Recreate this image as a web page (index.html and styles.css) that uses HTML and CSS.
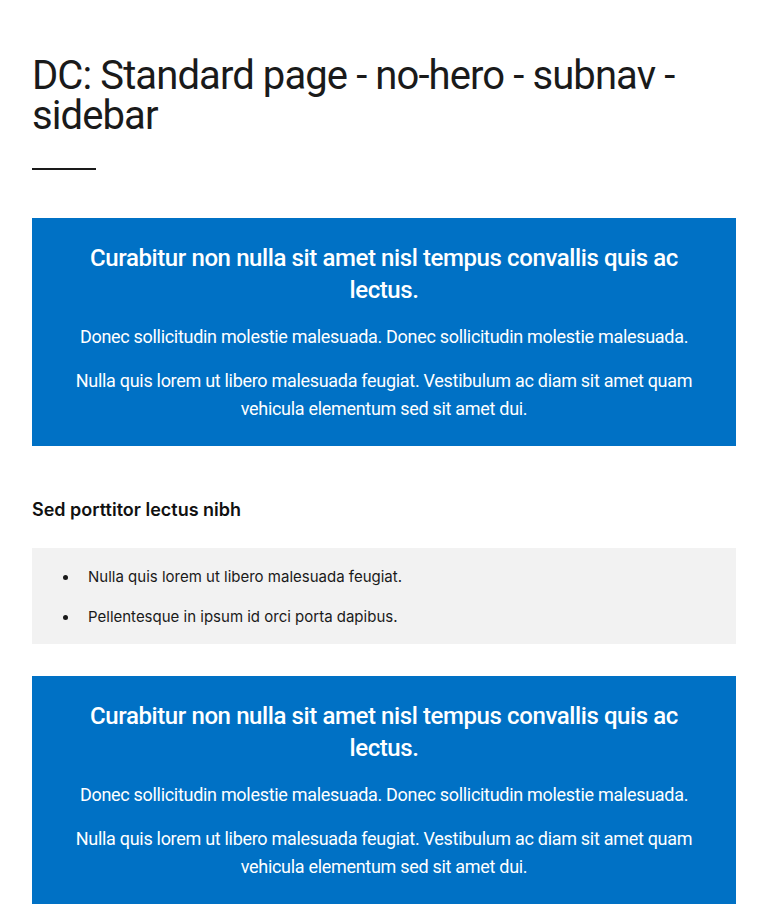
FILE: index.html
```html
<!DOCTYPE html>
<html lang="en">
<head>
<meta charset="utf-8">
<title>DC: Standard page - no-hero - subnav - sidebar</title>
<link rel="stylesheet" href="styles.css">
</head>
<body>
<main class="page">
  <header class="page-header">
    <h1 class="page-title">DC: Standard page - no-hero - subnav - sidebar</h1>
    <hr class="title-rule">
  </header>

  <section class="callout">
    <h2 class="callout-title">Curabitur non nulla sit amet nisl tempus convallis quis ac lectus.</h2>
    <p class="callout-text">Donec sollicitudin molestie malesuada. Donec sollicitudin molestie malesuada.</p>
    <p class="callout-text">Nulla quis lorem ut libero malesuada feugiat. Vestibulum ac diam sit amet quam vehicula elementum sed sit amet dui.</p>
  </section>

  <h3 class="section-title">Sed porttitor lectus nibh</h3>

  <div class="list-box">
    <ul class="bullets">
      <li>Nulla quis lorem ut libero malesuada feugiat.</li>
      <li>Pellentesque in ipsum id orci porta dapibus.</li>
    </ul>
  </div>

  <section class="callout">
    <h2 class="callout-title">Curabitur non nulla sit amet nisl tempus convallis quis ac lectus.</h2>
    <p class="callout-text">Donec sollicitudin molestie malesuada. Donec sollicitudin molestie malesuada.</p>
    <p class="callout-text">Nulla quis lorem ut libero malesuada feugiat. Vestibulum ac diam sit amet quam vehicula elementum sed sit amet dui.</p>
  </section>
</main>
</body>
</html>
```

FILE: styles.css
```css
* { box-sizing: border-box; }

html, body {
  margin: 0;
  padding: 0;
  background: #ffffff;
}

body {
  font-family: "Roboto", "Liberation Sans", sans-serif;
  color: #1a1a1a;
}

.page {
  padding: 56px 32px 16px;
  display: flex;
  flex-direction: column;
}

.page-title {
  margin: 0;
  font-family: "Roboto", "Liberation Sans", sans-serif;
  font-weight: 400;
  font-size: 40px;
  line-height: 40px;
  letter-spacing: -0.9px;
  color: #1a1a1a;
}

.title-rule {
  margin: 32px 0 0;
  width: 64px;
  height: 2px;
  border: 0;
  background: #1a1a1a;
}

.callout {
  margin-top: 48px;
  background: #0071c5;
  color: #ffffff;
  padding: 24px 40px 23px;
  text-align: center;
}

.callout-title {
  margin: 0 0 17px;
  font-family: "Roboto", "Liberation Sans", sans-serif;
  font-weight: 500;
  font-size: 24px;
  line-height: 32px;
  letter-spacing: -0.4px;
}

.callout-text {
  margin: 0 0 16px;
  font-size: 18px;
  line-height: 28px;
  letter-spacing: -0.3px;
}

.callout-text:last-child { margin-bottom: 0; }

.section-title {
  margin: 52px 0 0;
  font-family: "Inter", "Liberation Sans", sans-serif;
  font-weight: 600;
  font-size: 18px;
  line-height: 24px;
  color: #111111;
}

.list-box {
  margin-top: 26px;
  background: #f2f2f2;
  padding: 17px 0 15px;
}

.bullets {
  margin: 0;
  padding: 0 0 0 31px;
  list-style: none;
  font-family: "Inter", "Liberation Sans", sans-serif;
  font-size: 15px;
  line-height: 24px;
  color: #1a1a1a;
}

.bullets li {
  display: flex;
  align-items: center;
  gap: 20px;
}

.bullets li::before {
  content: "";
  flex: none;
  width: 5px;
  height: 5px;
  border-radius: 50%;
  background: #1a1a1a;
}

.bullets li + li { margin-top: 16px; }

.list-box + .callout { margin-top: 32px; }
```
